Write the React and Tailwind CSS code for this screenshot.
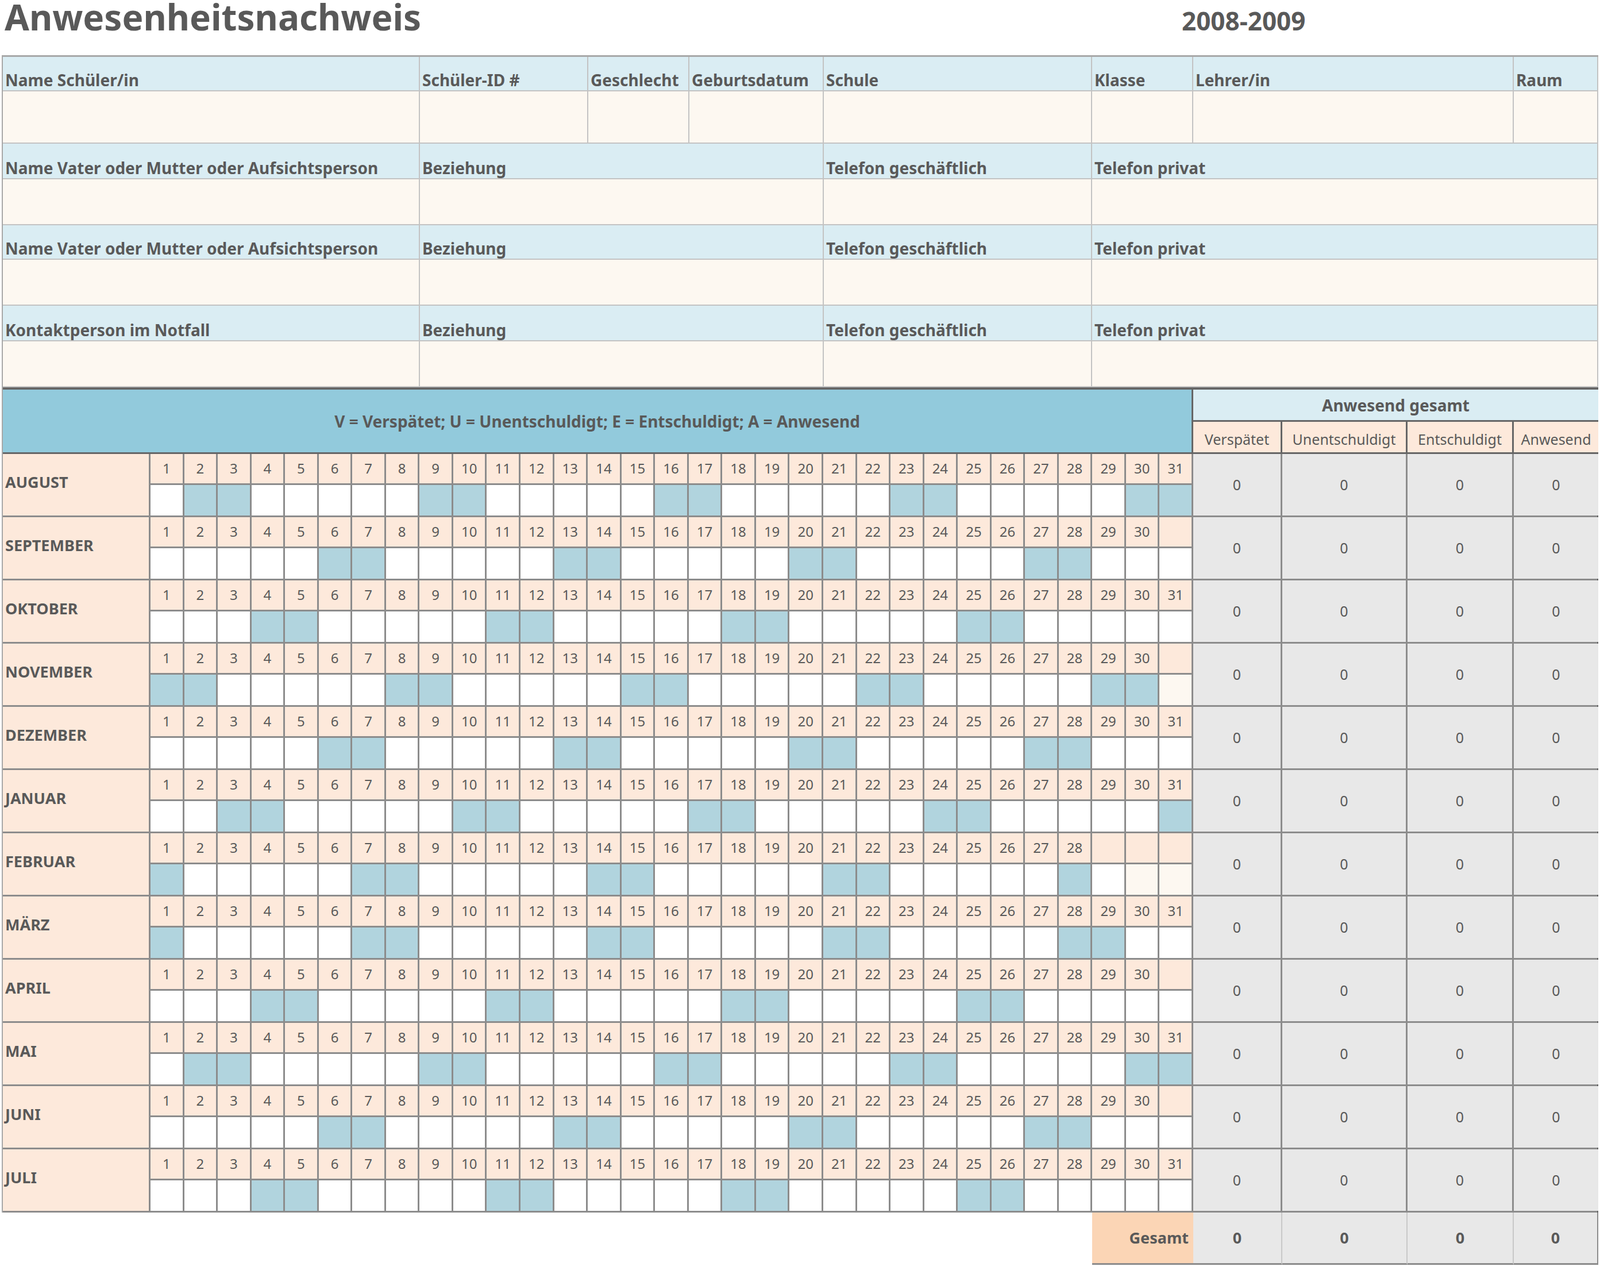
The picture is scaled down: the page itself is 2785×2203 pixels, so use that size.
import React from "react";

const MONTHS = [
  ["AUGUST", 2008, 7], ["SEPTEMBER", 2008, 8], ["OKTOBER", 2008, 9], ["NOVEMBER", 2008, 10],
  ["DEZEMBER", 2008, 11], ["JANUAR", 2009, 0], ["FEBRUAR", 2009, 1], ["MÄRZ", 2009, 2],
  ["APRIL", 2009, 3], ["MAI", 2009, 4], ["JUNI", 2009, 5], ["JULI", 2009, 6],
];
const DAYS = Array.from({ length: 31 }, (_, i) => i + 1);

function Lbl({ children, cls = "" }) {
  return (
    <div className={"flex items-end pl-1 pb-1 bg-[#daedf3] border-r-2 border-b-2 border-[#c3c3c3] text-[28px] font-bold text-[#595959] leading-none whitespace-nowrap overflow-hidden " + cls}>
      {children}
    </div>
  );
}
function Inp({ cls = "" }) {
  return <div className={"bg-[#fdf8f1] border-r-2 border-b-2 border-[#c3c3c3] " + cls} />;
}

function MonthRow({ name, year, m }) {
  const len = new Date(year, m + 1, 0).getDate();
  return (
    <div className="flex h-[110px] border-b-[3px] border-[#8c8c8c]">
      <div className="w-[257px] shrink-0 bg-[#fde9db] border-r-[3px] border-[#8c8c8c] flex items-center pl-1 pb-2 text-[27px] font-bold text-[#595959]">{name}</div>
      <div className="w-[1815px] shrink-0 grid grid-cols-[repeat(31,1fr)] grid-rows-2">
        {DAYS.map((d) => (
          <div key={"h" + d} className="bg-[#fde9db] border-r-[3px] border-b-[3px] border-[#8c8c8c] flex items-center justify-center text-[24px] text-[#595959]">
            {d <= len ? d : ""}
          </div>
        ))}
        {DAYS.map((d) => {
          let bg = "bg-white";
          if (d <= len) {
            const wd = new Date(year, m, d).getDay();
            if (wd === 0 || wd === 6) bg = "bg-[#b1d4de]";
          } else if ((m === 10 && d === 31) || (m === 1 && d >= 30)) bg = "bg-[#fdf8f1]";
          return <div key={"b" + d} className={bg + " border-r-[3px] border-[#8c8c8c]"} />;
        })}
      </div>
      {[155, 218, 185, 147].map((w, i) => (
        <div key={i} style={{ width: w }} className={"shrink-0 bg-[#e8e8e8] flex items-center justify-center text-[25px] text-[#595959] " + (i < 3 ? "border-r-[3px] border-[#8c8c8c]" : "")}>0</div>
      ))}
    </div>
  );
}

export default function App() {
  return (
    <div className="w-[2785px] h-[2203px] bg-white font-[Lato,'Liberation_Sans',sans-serif] text-[#595959]">
      <div className="flex h-[96px] items-start">
        <div className="w-[2057px] pl-[8px] text-[62px] font-bold leading-none -mt-[2px]">Anwesenheitsnachweis</div>
        <div className="text-[44px] font-bold leading-none mt-[14px]">2008-2009</div>
      </div>
      <div className="ml-[3px] w-[2779px] border-l-2 border-t-[3px] border-[#a8a8a8]">
        <div className="grid grid-cols-[726px_293px_176px_234px_467px_176px_558px_147px] grid-rows-[60px_91px_62px_80px_60px_80px_62px_80px] border-r-2 border-[#a8a8a8]">
          <Lbl>Name Schüler/in</Lbl>
          <Lbl>Schüler-ID #</Lbl>
          <Lbl>Geschlecht</Lbl>
          <Lbl>Geburtsdatum</Lbl>
          <Lbl>Schule</Lbl>
          <Lbl>Klasse</Lbl>
          <Lbl>Lehrer/in</Lbl>
          <Lbl>Raum</Lbl>
          {[0, 1, 2, 3, 4, 5, 6, 7].map((i) => <Inp key={i} />)}
          {[
            "Name Vater oder Mutter oder Aufsichtsperson",
            "Name Vater oder Mutter oder Aufsichtsperson",
            "Kontaktperson im Notfall",
          ].map((n, i) => (
            <React.Fragment key={i}>
              <Lbl>{n}</Lbl>
              <Lbl cls="col-span-3">Beziehung</Lbl>
              <Lbl>Telefon geschäftlich</Lbl>
              <Lbl cls="col-span-3">Telefon privat</Lbl>
              <Inp />
              <Inp cls="col-span-3" />
              <Inp />
              <Inp cls="col-span-3" />
            </React.Fragment>
          ))}
        </div>
        <div className="border-t-[4px] border-r-2 border-[#666]">
          <div className="flex h-[112px] border-b-[3px] border-[#666]">
            <div className="w-[2072px] shrink-0 bg-[#92cadc] border-r-[3px] border-[#666] flex items-center justify-center text-[28px] font-bold">
              V = Verspätet; U = Unentschuldigt; E = Entschuldigt; A = Anwesend
            </div>
            <div className="flex-1 flex flex-col">
              <div className="h-[56px] bg-[#daedf3] border-b-[3px] border-[#666] flex items-center justify-center text-[28px] font-bold">Anwesend gesamt</div>
              <div className="flex-1 flex">
                {[["Verspätet", 155], ["Unentschuldigt", 218], ["Entschuldigt", 185], ["Anwesend", 147]].map(([t, w], i) => (
                  <div key={t} style={{ width: w }} className={"shrink-0 bg-[#fde9db] flex items-end justify-center pb-1 text-[25px] " + (i < 3 ? "border-r-[3px] border-[#666]" : "")}>{t}</div>
                ))}
              </div>
            </div>
          </div>
          {MONTHS.map(([n, y, m]) => <MonthRow key={n} name={n} year={y} m={m} />)}
        </div>
        <div className="flex h-[91px] -ml-[2px]">
          <div className="w-[1898px] shrink-0 bg-white" />
          <div className="w-[176px] shrink-0 bg-[#fbd5b5] border-b-[3px] border-[#8c8c8c] flex items-center justify-end pr-2 text-[27px] font-bold">Gesamt</div>
          {[155, 218, 185, 147].map((w, i) => (
            <div key={i} style={{ width: w }} className={"shrink-0 bg-[#e8e8e8] border-b-[3px] border-[#8c8c8c] flex items-center justify-center text-[27px] font-bold " + (i < 3 ? "border-r-2 border-r-[#c8c8c8]" : "border-r-2 border-r-[#8c8c8c]")}>0</div>
          ))}
        </div>
      </div>
    </div>
  );
}
